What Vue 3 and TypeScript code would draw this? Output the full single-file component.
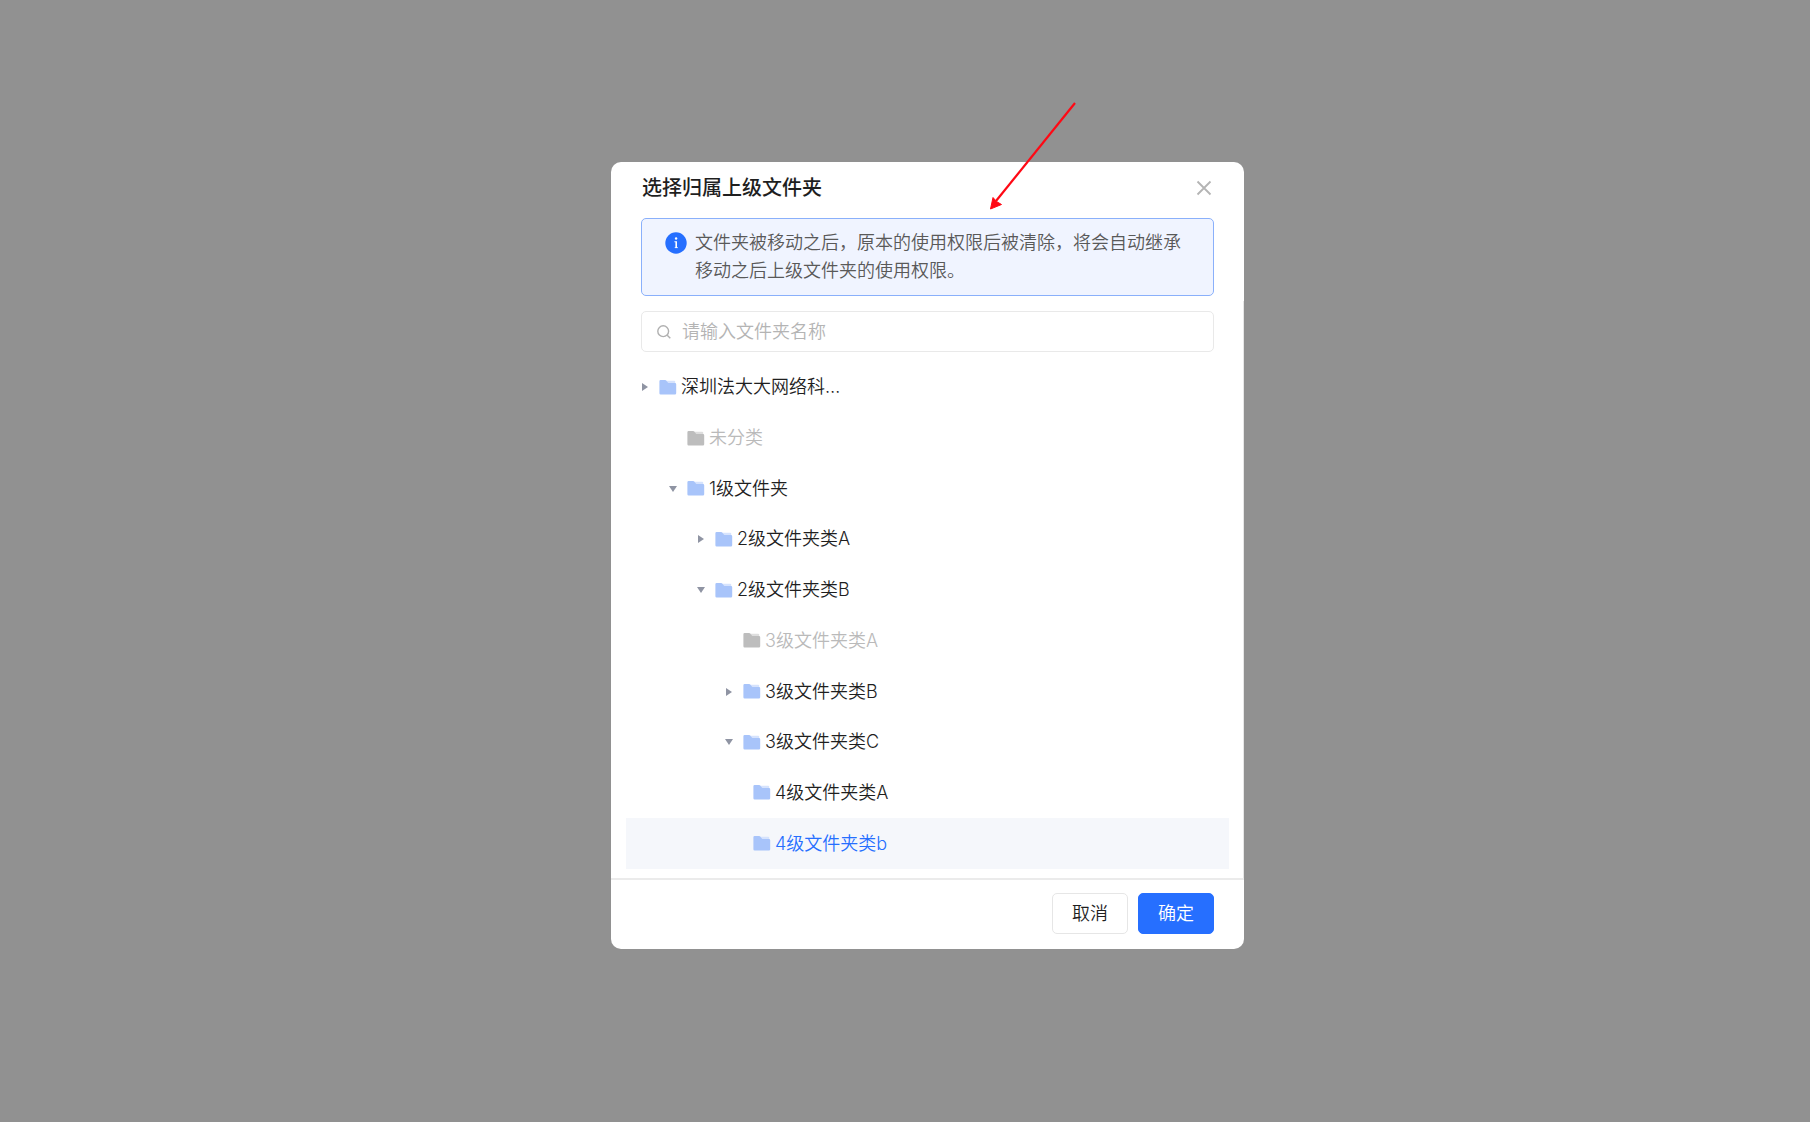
<script setup lang="ts">
import { ref } from 'vue'

type Expand = 'open' | 'closed' | 'none'

interface FolderNode {
  id: string
  name: string
  level: number
  expand: Expand
  disabled?: boolean
}

const folders: FolderNode[] = [
  { id: 'root', name: '深圳法大大网络科…', level: 0, expand: 'closed' },
  { id: 'uncat', name: '未分类', level: 1, expand: 'none', disabled: true },
  { id: 'l1', name: '1级文件夹', level: 1, expand: 'open' },
  { id: 'l2a', name: '2级文件夹类A', level: 2, expand: 'closed' },
  { id: 'l2b', name: '2级文件夹类B', level: 2, expand: 'open' },
  { id: 'l3a', name: '3级文件夹类A', level: 3, expand: 'none', disabled: true },
  { id: 'l3b', name: '3级文件夹类B', level: 3, expand: 'closed' },
  { id: 'l3c', name: '3级文件夹类C', level: 3, expand: 'open' },
  { id: 'l4a', name: '4级文件夹类A', level: 4, expand: 'none' },
  { id: 'l4b', name: '4级文件夹类b', level: 4, expand: 'none' },
]

const keyword = ref('')
const selected = ref('l4b')
</script>

<template>
  <div class="mask">
    <section class="dialog" role="dialog" aria-labelledby="dialog-title">
      <header class="header">
        <h1 id="dialog-title" class="title">选择归属上级文件夹</h1>
        <button class="close" type="button" aria-label="关闭">
          <svg width="16" height="16" viewBox="0 0 16 16" fill="none" stroke="#b4b4b4" stroke-width="1.8">
            <path d="M1.5 1.5 14.5 14.5M14.5 1.5 1.5 14.5" />
          </svg>
        </button>
      </header>

      <div class="alert" role="note">
        <svg class="info" width="22" height="22" viewBox="0 0 22 22">
          <circle cx="11" cy="11" r="10.7" fill="#266fff" />
          <path d="M9.4 9.200h2.600v6.800h-1.600v-5.700h-1z" fill="#fff" />
          <path d="M9.700 15.300h3.200v.8H9.700z" fill="#fff" />
          <circle cx="11.1" cy="6.500" r="1.200" fill="#fff" />
        </svg>
        <p class="alert-text">
          文件夹被移动之后，原本的使用权限后被清除，将会自动继承<br />移动之后上级文件夹的使用权限。
        </p>
      </div>

      <div class="body">
        <label class="search">
          <svg width="14" height="14" viewBox="0 0 14 14" fill="none" stroke="#b0b0b0" stroke-width="1.4">
            <circle cx="6.2" cy="6.2" r="5.4" />
            <path d="M10.2 10.2 13.3 13.3" />
          </svg>
          <input v-model="keyword" type="text" placeholder="请输入文件夹名称" aria-label="文件夹名称" />
        </label>

        <ul class="tree">
          <li
            v-for="node in folders"
            :key="node.id"
            class="row"
            :class="['level-' + node.level, { active: node.id === selected }]"
          >
            <span class="toggle">
              <svg v-if="node.expand === 'closed'" width="8" height="8" viewBox="0 0 8 8">
                <path d="M1 0v8L7 4z" fill="#8f94a3" />
              </svg>
              <svg v-else-if="node.expand === 'open'" width="8" height="8" viewBox="0 0 8 8">
                <path d="M0 1h8L4 7z" fill="#8f94a3" />
              </svg>
            </span>
            <button
              class="node"
              type="button"
              :disabled="node.disabled"
              @click="selected = node.id"
            >
              <svg class="folder" width="18" height="15" viewBox="0 0 18 15">
                <path class="back" d="M7 .8h8.2q1 0 1 1V4H8z" />
                <path
                  class="front"
                  d="M1.6 0h4.6q.6 0 1 .5l1.6 2q.4.6 1.1.6H16q1.2 0 1.2 1.2v8.900q0 1.200-1.200 1.200H1.600Q.4 14.400.4 13.200V1.200Q.4 0 1.600 0z"
                />
              </svg>
              <span>{{ node.name }}</span>
            </button>
          </li>
        </ul>
      </div>

      <footer class="footer">
        <button class="btn" type="button">取消</button>
        <button class="btn primary" type="button">确定</button>
      </footer>

      <svg class="pointer" width="88" height="110" viewBox="0 0 88 110" aria-hidden="true">
        <path d="M86 1 7 99" stroke="#ff0814" stroke-width="2.2" fill="none" />
        <path d="M1.5 107 4 95.5 7.5 99.5 12.5 102.5z" fill="#ff0814" stroke="#ff0814" />
      </svg>
    </section>
  </div>
</template>

<style>
body {
  margin: 0;
}
</style>

<style scoped>
* {
  box-sizing: border-box;
}

.mask {
  display: flex;
  align-items: center;
  justify-content: center;
  min-height: 100vh;
  padding: 0 0 11px 45px;
  background: #919191;
  color: #1f1f1f;
  font-family: Inter, "Noto Sans CJK SC", sans-serif;
  font-size: 18px;
  font-weight: 350;
  line-height: 28px;
}

button,
input {
  padding: 0;
  border: 0;
  background: none;
  color: inherit;
  font: inherit;
}

.dialog {
  position: relative;
  width: 633px;
  max-width: 100%;
  border-radius: 10px;
  background: #fff;
}

.header {
  display: flex;
  align-items: center;
  justify-content: space-between;
  height: 56px;
  padding: 0 30px 5px 31px;
}

.title {
  margin: 0;
  font-size: 20px;
  font-weight: 500;
}

.close {
  width: 20px;
  height: 20px;
  line-height: 0;
}

.alert {
  display: flex;
  gap: 8px;
  margin: 0 30px 5px;
  padding: 10px 23px;
  border: 1px solid #8ab0fb;
  border-radius: 5px;
  background: #f0f4ff;
  color: #595959;
}

.info {
  flex: none;
  margin-top: 3px;
}

.alert-text {
  margin: 0;
  white-space: nowrap;
}

.body {
  padding: 10px 14px 9px 15px;
  border-right: 1px solid #e6e6e6;
}

.search {
  display: flex;
  align-items: center;
  gap: 11px;
  height: 41px;
  margin: 0 15px 10px;
  padding: 0 15px;
  border: 1px solid #e9e9e9;
  border-radius: 5px;
}

.search input {
  flex: 1;
  min-width: 0;
  outline: 0;
}

.search input::placeholder {
  color: #b4b4b4;
}

.tree {
  display: grid;
  grid-auto-rows: 1fr;
  min-height: 507px;
  margin: 0;
  padding: 0;
  list-style: none;
}

.row {
  display: flex;
  align-items: center;
  padding-left: 15px;
}

.level-1 {
  padding-left: 43px;
}

.level-2 {
  padding-left: 71px;
}

.level-3 {
  padding-left: 99px;
}

.level-4 {
  padding-left: 109px;
}

.toggle {
  width: 18px;
  line-height: 0;
}

.node {
  display: flex;
  align-items: center;
  gap: 4px;
  cursor: pointer;
}

.node:disabled {
  color: #bababa;
  cursor: not-allowed;
}

.front {
  fill: #a8c4fa;
}

.back {
  fill: #d6e3fd;
}

.node:disabled .front {
  fill: #bdbdbd;
}

.node:disabled .back {
  fill: #dedede;
}

.active {
  background: #f5f7fb;
  color: #266fff;
}

.footer {
  display: flex;
  justify-content: flex-end;
  gap: 10px;
  padding: 13px 30px 15px;
  border-top: 2px solid #ebebeb;
}

.btn {
  width: 76px;
  height: 41px;
  border: 1px solid #e6e6e6;
  border-radius: 5px;
  cursor: pointer;
}

.primary {
  border-color: #266fff;
  background: #266fff;
  color: #fff;
}

.pointer {
  position: absolute;
  top: -60px;
  left: 378px;
  pointer-events: none;
}
</style>
